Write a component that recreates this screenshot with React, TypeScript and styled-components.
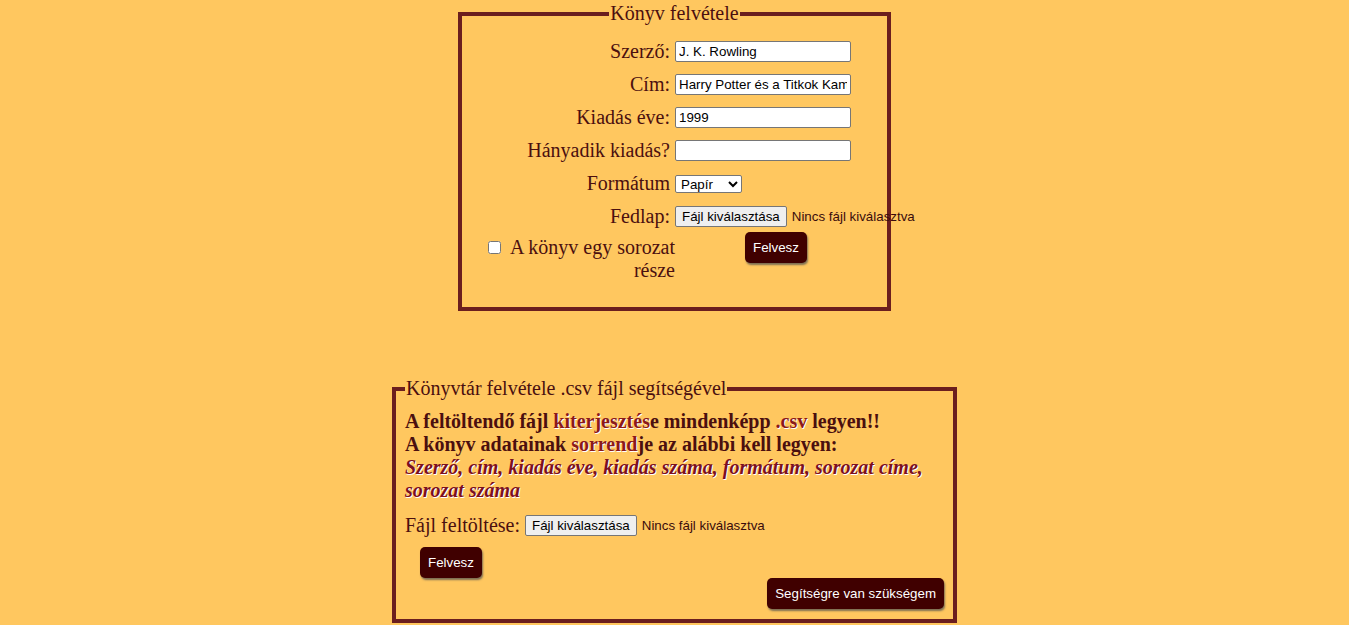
import React from "react";
import styled, { createGlobalStyle } from "styled-components";

const Global = createGlobalStyle`
  html, body {
    margin: 0;
    background: #ffc75f;
  }
  body {
    font-family: "Liberation Serif", "Times New Roman", serif;
    color: #4b0f0f;
  }
`;

const Page = styled.div`
  padding-top: 2px;
  padding-bottom: 4px;
`;

const Fieldset = styled.fieldset<{ $w: number; $mt?: number }>`
  box-sizing: border-box;
  width: ${(p) => p.$w}px;
  margin: ${(p) => p.$mt ?? 0}px auto 0;
  border: 4px solid #6b1e1e;
  min-width: 0;
`;

const BookFieldset = styled(Fieldset)`
  padding: 15px 8px 25px;
`;

const CsvFieldset = styled(Fieldset)`
  padding: 10px 9px 10px;
`;

const Legend = styled.legend<{ $center?: boolean }>`
  font-size: 20px;
  line-height: 23px;
  padding: 0 1px;
  ${(p) => (p.$center ? "margin: 0 auto;" : "")}
`;

const Rows = styled.div`
  display: flex;
  flex-direction: column;
  gap: 10px;
`;

const Row = styled.div`
  display: flex;
  align-items: center;
  height: 23px;
`;

const Label = styled.label`
  width: 200px;
  text-align: right;
  font-size: 20px;
  line-height: 23px;
  margin-right: 5px;
  flex: none;
`;

const TextInput = styled.input`
  box-sizing: border-box;
  width: 176px;
  height: 21px;
  border: 1px solid #767676;
  border-radius: 2px;
  padding: 1px 3px;
  font-family: "Liberation Sans", Arial, sans-serif;
  font-size: 13.33px;
  color: #000;
  background: #fff;
  margin: 0;
`;

const Select = styled.select`
  box-sizing: border-box;
  width: 67px;
  height: 18px;
  border: 1px solid #767676;
  border-radius: 2px;
  font-family: "Liberation Sans", Arial, sans-serif;
  font-size: 13.33px;
  color: #000;
  background: #fff;
  margin: 0;
  padding: 0 0 0 1px;
`;

const FilePicker = styled.label`
  display: inline-flex;
  align-items: center;
  gap: 5px;
  font-family: "Liberation Sans", Arial, sans-serif;
  font-size: 13.33px;
  color: #3a0c0c;
  white-space: nowrap;
  cursor: pointer;
  input {
    display: none;
  }
`;

const FileButton = styled.span`
  box-sizing: border-box;
  display: inline-flex;
  align-items: center;
  height: 21px;
  padding: 0 6px;
  border: 1px solid #767676;
  border-radius: 2px;
  background: #efefef;
  color: #000;
`;

const CheckRow = styled.div`
  display: flex;
  align-items: flex-start;
  margin-top: 4px;
`;

const CheckLabel = styled.label`
  width: 205px;
  flex: none;
  text-align: right;
  font-size: 20px;
  line-height: 23px;
  padding-top: 4px;
  input {
    width: 13px;
    height: 13px;
    margin: 3px 5px 3px 4px;
    vertical-align: 0;
  }
`;

const Button = styled.button<{ $ml?: number }>`
  background: #400000;
  color: #fff;
  border: none;
  border-radius: 5px;
  padding: 8px 8px;
  font-family: "Liberation Sans", Arial, sans-serif;
  font-size: 13.33px;
  line-height: 15px;
  box-shadow: 1px 2px 2px rgba(80, 80, 80, 0.75);
  margin: 0 0 0 ${(p) => p.$ml ?? 0}px;
  cursor: pointer;
`;

const Info = styled.div`
  font-size: 20px;
  line-height: 23px;
  font-weight: bold;
`;

const Hl = styled.span`
  color: #8b1a1a;
  text-shadow: 1px 1px 0 #fff;
`;

const Order = styled.span`
  display: block;
  font-style: italic;
  color: #7b1020;
  text-shadow: 1px 1px 0 #fff;
`;

const UploadRow = styled.div`
  display: flex;
  align-items: center;
  gap: 5px;
  height: 23px;
  margin-top: 12px;
  font-size: 20px;
`;

const SubmitRow = styled.div`
  margin-top: 10px;
  display: flex;
`;

const HelpRow = styled.div`
  display: flex;
  justify-content: flex-end;
`;

function FileInput() {
  return (
    <FilePicker>
      <input type="file" />
      <FileButton>Fájl kiválasztása</FileButton>
      <span>Nincs fájl kiválasztva</span>
    </FilePicker>
  );
}

export default function App() {
  return (
    <>
      <Global />
      <Page>
        <BookFieldset $w={433}>
          <Legend $center>Könyv felvétele</Legend>
          <Rows>
            <Row>
              <Label>Szerző:</Label>
              <TextInput defaultValue="J. K. Rowling" />
            </Row>
            <Row>
              <Label>Cím:</Label>
              <TextInput defaultValue="Harry Potter és a Titkok Kamrája" />
            </Row>
            <Row>
              <Label>Kiadás éve:</Label>
              <TextInput defaultValue="1999" />
            </Row>
            <Row>
              <Label>Hányadik kiadás?</Label>
              <TextInput defaultValue="" />
            </Row>
            <Row>
              <Label>Formátum</Label>
              <Select defaultValue="Papír">
                <option>Papír</option>
                <option>E-könyv</option>
                <option>Hangoskönyv</option>
              </Select>
            </Row>
            <Row>
              <Label>Fedlap:</Label>
              <FileInput />
            </Row>
          </Rows>
          <CheckRow>
            <CheckLabel>
              <input type="checkbox" /> A könyv egy sorozat része
            </CheckLabel>
            <Button $ml={70}>Felvesz</Button>
          </CheckRow>
        </BookFieldset>

        <CsvFieldset $w={565} $mt={66}>
          <Legend>Könyvtár felvétele .csv fájl segítségével</Legend>
          <Info>
            A feltöltendő fájl <Hl>kiterjesztés</Hl>e mindenképp <Hl>.csv</Hl> legyen!!
            <br />
            A könyv adatainak <Hl>sorrend</Hl>je az alábbi kell legyen:
            <Order>
              Szerző, cím, kiadás éve, kiadás száma, formátum, sorozat címe, sorozat száma
            </Order>
          </Info>
          <UploadRow>
            <span>Fájl feltöltése:</span>
            <FileInput />
          </UploadRow>
          <SubmitRow>
            <Button $ml={15}>Felvesz</Button>
          </SubmitRow>
          <HelpRow>
            <Button>Segítségre van szükségem</Button>
          </HelpRow>
        </CsvFieldset>
      </Page>
    </>
  );
}
